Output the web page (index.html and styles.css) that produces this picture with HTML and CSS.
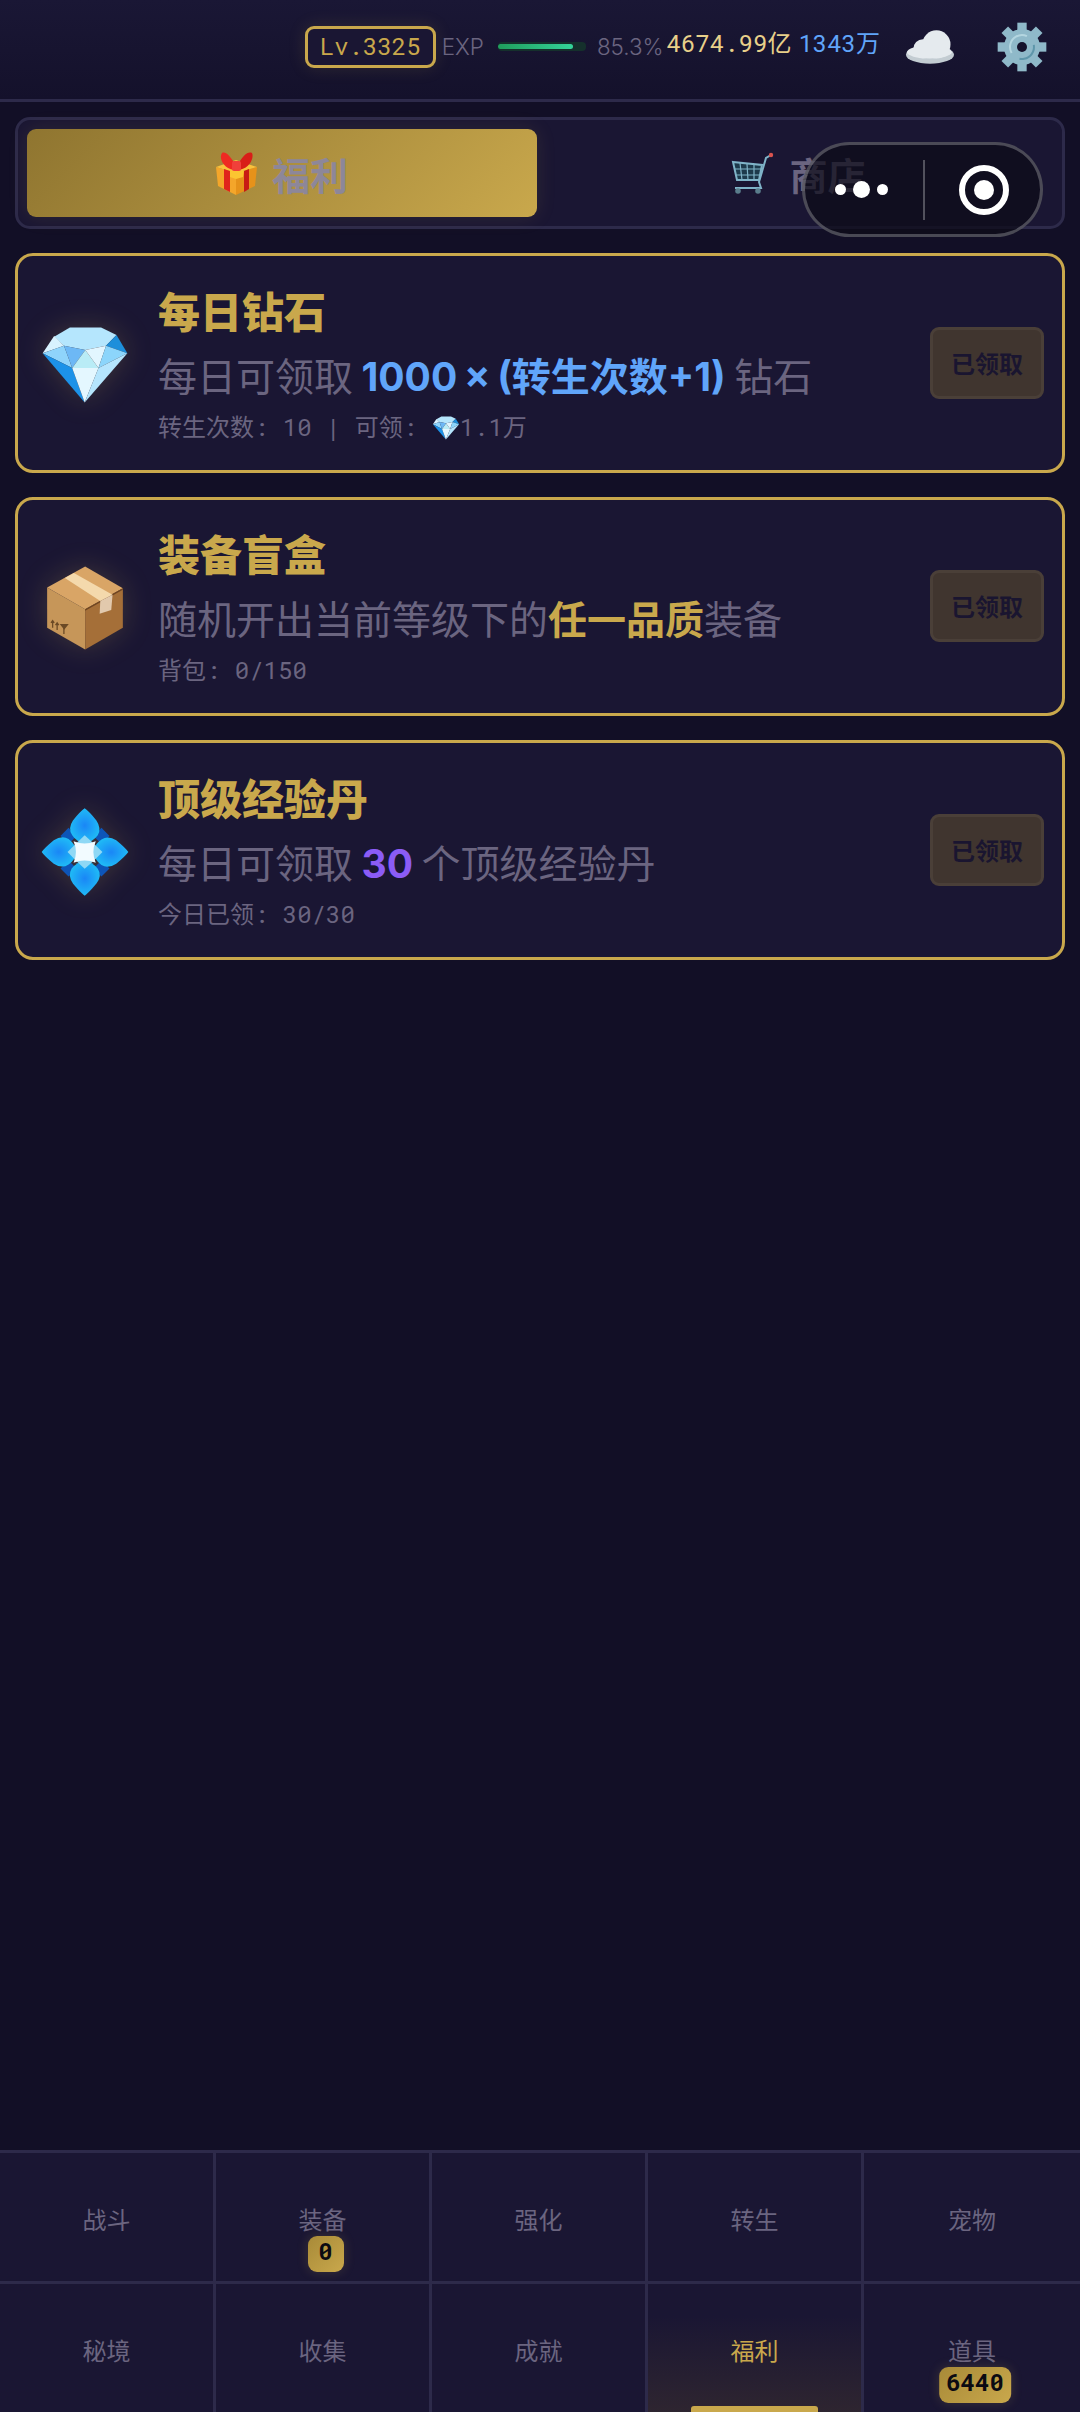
FILE: index.html
```html
<!DOCTYPE html>
<html lang="zh">
<head>
<meta charset="utf-8">
<title>福利</title>
<link rel="stylesheet" href="styles.css">
</head>
<body>
<svg class="defs" aria-hidden="true">
  <defs>
    <symbol id="diamond" viewBox="60 78 268 236">
      <polygon points="100,110 148,82 243,82 290,105 258,137 195,150 130,137" fill="#b5e6fd"/>
      <polygon points="65,160 100,108 130,137" fill="#d8f2fe"/>
      <polygon points="65,160 130,137 155,205" fill="#8fd4fb"/>
      <polygon points="130,137 195,150 155,205" fill="#6db8f5"/>
      <polygon points="195,150 235,205 155,205" fill="#b9ecf6"/>
      <polygon points="195,150 258,137 235,205" fill="#e2f6ff"/>
      <polygon points="258,137 290,105 323,160" fill="#1e8fdb"/>
      <polygon points="258,137 323,160 235,205" fill="#8cd5fb"/>
      <polygon points="65,160 155,205 193,310" fill="#1c92e8"/>
      <polygon points="155,205 235,205 193,310" fill="#e4f7ff"/>
      <polygon points="235,205 323,160 193,310" fill="#b5e5fd"/>
    </symbol>
    <symbol id="box" viewBox="70 60 245 267">
      <polygon points="193,65 310,132 193,197 75,130" fill="#d9a566"/>
      <polygon points="75,130 193,197 193,322 75,255" fill="#c69659"/>
      <polygon points="193,197 310,132 310,255 193,322" fill="#a56f38"/>
      <polygon points="193,197 310,132 310,137 193,202" fill="#6f4522"/>
      <polygon points="130,100 158,85 278,152 240,172" fill="#f4d9ac"/>
      <polygon points="240,172 278,152 274,200 238,211" fill="#e2c9ad"/>
      <path d="M92 255v-22m-5 7l5-7 5 7M106 262v-22m-5 7l5-7 5 7M127 274v-22" stroke="#6b4a26" stroke-width="4" fill="none"/>
      <path d="M114 243h28l-14 18z" fill="#6b4a26"/>
    </symbol>
    <radialGradient id="petal" cx="50%" cy="50%" r="60%">
      <stop offset="0" stop-color="#1a86f6"/>
      <stop offset="1" stop-color="#20c4f6"/>
    </radialGradient>
    <symbol id="spark" viewBox="60 65 268 270">
      <g fill="#0d55b8">
        <rect x="128" y="135" width="34" height="34" transform="rotate(45 145 152)"/>
        <rect x="226" y="135" width="34" height="34" transform="rotate(45 243 152)"/>
        <rect x="128" y="232" width="34" height="34" transform="rotate(45 145 249)"/>
        <rect x="226" y="232" width="34" height="34" transform="rotate(45 243 249)"/>
      </g>
      <g fill="url(#petal)">
        <path d="M193 70Q205 78 228 106Q244 130 232 150Q216 172 193 172Q170 172 156 150Q142 130 158 106Q181 78 193 70Z"/>
        <path d="M193 330Q181 322 158 294Q142 270 154 250Q170 228 193 228Q216 228 232 250Q246 270 228 294Q205 322 193 330Z"/>
        <path d="M65 200Q73 188 101 165Q125 149 145 161Q167 177 167 200Q167 223 145 237Q125 251 101 235Q73 212 65 200Z"/>
        <path d="M323 200Q315 212 287 235Q263 251 243 239Q221 223 221 200Q221 177 243 163Q263 149 287 165Q315 188 323 200Z"/>
      </g>
      <path d="M193 150Q222 176 246 200Q222 226 193 250Q166 226 142 200Q166 176 193 150Z" fill="#8fd8f5"/>
      <path d="M160 168Q193 182 226 168Q212 200 226 232Q193 218 160 232Q174 200 160 168Z" fill="#f2fbff"/>
    </symbol>
    <symbol id="gift" viewBox="0 0 41 43">
      <polygon points="0,15 20,21 20,43 2,34" fill="#f4a62a"/>
      <polygon points="41,15 20,21 20,43 39,34" fill="#e6921a"/>
      <polygon points="0,15 20,8 41,15 20,21" fill="#f9c23c"/>
      <polygon points="8,17 14,19 14,40 8,37" fill="#e0241c"/>
      <polygon points="28,19 33,17 33,37 28,40" fill="#c81a14"/>
      <polygon points="14,19 28,19 27,25 20,27 14,25" fill="#fbc531"/>
      <path d="M20 14C14 3 9 -1 6 1C3 5 6 16 18 18Z" fill="#ee2a22"/>
      <path d="M21 14C27 3 32 -1 36 1C38 5 35 16 23 18Z" fill="#d81e18"/>
      <rect x="16" y="9" width="9" height="10" rx="2" fill="#f0403a"/>
    </symbol>
    <symbol id="cart" viewBox="0 0 44 43">
      <path d="M3 10L32 13L29 28H7Z" fill="#1d3a4c" stroke="#7fb3c8" stroke-width="2"/>
      <path d="M10 11l2 17M17 12l1 16M24 12l0 16M5 17h26M6 23h24" stroke="#7fb3c8" stroke-width="1.2" fill="none"/>
      <path d="M41 3L36 6L29 30L31 36H5" stroke="#7fb3c8" stroke-width="2" fill="none"/>
      <circle cx="41" cy="3" r="2.2" fill="#d9534f"/>
      <circle cx="8" cy="39" r="2.8" fill="#5a7d8c"/>
      <circle cx="28" cy="39" r="2.8" fill="#5a7d8c"/>
    </symbol>
    <symbol id="cloud" viewBox="72 88 156 112">
      <ellipse cx="150" cy="168" rx="75" ry="28" fill="#c3ccd2"/>
      <circle cx="170" cy="136" r="44" fill="#e5eaee"/>
      <circle cx="128" cy="150" r="30" fill="#e5eaee"/>
      <ellipse cx="148" cy="160" rx="70" ry="20" fill="#e5eaee"/>
    </symbol>
    <symbol id="gear" viewBox="350 70 150 150">
      <g fill="#8fb9c9">
        <rect x="411" y="72" width="28" height="146"/>
        <rect x="411" y="72" width="28" height="146" transform="rotate(45 425 145)"/>
        <rect x="411" y="72" width="28" height="146" transform="rotate(90 425 145)"/>
        <rect x="411" y="72" width="28" height="146" transform="rotate(135 425 145)"/>
        <circle cx="425" cy="145" r="54"/>
      </g>
      <circle cx="425" cy="145" r="36" fill="none" stroke="#b4d6e0" stroke-width="6" stroke-dasharray="90 200" transform="rotate(150 425 145)"/>
      <circle cx="425" cy="145" r="36" fill="none" stroke="#5e96aa" stroke-width="6" stroke-dasharray="70 200" transform="rotate(-10 425 145)"/>
      <circle cx="425" cy="145" r="15" fill="#15122c"/>
    </symbol>
  </defs>
</svg>

<div class="app">
  <header class="topbar">
    <span class="level">Lv.3325</span>
    <span class="exp-label">EXP</span>
    <span class="exp-track"><span class="exp-fill"></span></span>
    <span class="exp-pct">85.3%</span>
    <span class="gold">4674.99亿</span>
    <span class="gems">1343万</span>
    <svg class="ico-cloud"><use href="#cloud"/></svg>
    <svg class="ico-gear"><use href="#gear"/></svg>
  </header>

  <div class="capsule">
    <span class="cap-dots"><i class="dot"></i><i class="dot big"></i><i class="dot"></i></span>
    <span class="cap-line"></span>
    <span class="cap-ring"><i class="cap-core"></i></span>
  </div>

  <main class="content">
    <nav class="tabs">
      <div class="tab active"><svg class="ico-tab"><use href="#gift"/></svg><span>福利</span></div>
      <div class="tab"><svg class="ico-tab cart"><use href="#cart"/></svg><span>商店</span></div>
    </nav>

    <section class="card">
      <div class="card-icon"><svg class="art diamond"><use href="#diamond"/></svg></div>
      <div class="card-info">
        <h2 class="card-title">每日钻石</h2>
        <p class="card-desc">每日可领取 <b class="blue">1000 × (转生次数+1)</b> 钻石</p>
        <p class="card-sub">转生次数: 10 | 可领: <svg class="mini"><use href="#diamond"/></svg>1.1万</p>
      </div>
      <div class="claimed">已领取</div>
    </section>

    <section class="card">
      <div class="card-icon"><svg class="art box"><use href="#box"/></svg></div>
      <div class="card-info">
        <h2 class="card-title">装备盲盒</h2>
        <p class="card-desc">随机开出当前等级下的<b class="amber">任一品质</b>装备</p>
        <p class="card-sub">背包: 0/150</p>
      </div>
      <div class="claimed">已领取</div>
    </section>

    <section class="card">
      <div class="card-icon"><svg class="art spark"><use href="#spark"/></svg></div>
      <div class="card-info">
        <h2 class="card-title">顶级经验丹</h2>
        <p class="card-desc">每日可领取 <b class="violet">30</b> 个顶级经验丹</p>
        <p class="card-sub">今日已领: 30/30</p>
      </div>
      <div class="claimed">已领取</div>
    </section>
  </main>

  <footer class="nav">
    <div class="cell">战斗</div>
    <div class="cell">装备<span class="badge">0</span></div>
    <div class="cell">强化</div>
    <div class="cell">转生</div>
    <div class="cell">宠物</div>
    <div class="cell">秘境</div>
    <div class="cell">收集</div>
    <div class="cell">成就</div>
    <div class="cell current">福利<span class="marker"></span></div>
    <div class="cell">道具<span class="badge">6440</span></div>
  </footer>
</div>
</body>
</html>
```
FILE: styles.css
```css
* { box-sizing: border-box; }
html, body { margin: 0; padding: 0; }
body {
  width: 1080px;
  height: 2412px;
  overflow: hidden;
  background: #120f26;
  font-family: "Noto Sans CJK SC", sans-serif;
  color: #6b6580;
}
.defs { position: absolute; width: 0; height: 0; }
.app { position: relative; display: flex; flex-direction: column; height: 2412px; }

.topbar {
  display: flex;
  align-items: center;
  justify-content: flex-end;
  height: 102px;
  padding: 0 33px 6px 0;
  background: linear-gradient(180deg, #1a1735, #14112b);
  border-bottom: 3px solid #2d2a4a;
  font: 300 22.4px Inter, "Noto Sans CJK SC", sans-serif;
}
.level, .gold, .gems { font: 400 24px/32px "Roboto Mono", "DejaVu Sans Mono", "Noto Sans CJK SC", monospace; }
.level {
  width: 131px;
  height: 42px;
  line-height: 34px;
  text-align: center;
  border: 3px solid #c9a84c;
  border-radius: 9px;
  color: #c9a84c;
  background: #1a1633;
  box-shadow: 0 0 18px rgba(201, 168, 76, .14);
}
.exp-label { margin-left: 6px; }
.exp-track { width: 88px; height: 9px; margin-left: 14px; border-radius: 4px; background: #15302c; overflow: hidden; display: block; }
.exp-fill { display: block; width: 85.3%; height: 5px; margin-top: 2px; border-radius: 3px; background: linear-gradient(90deg, #1f9d5c, #34d399); }
.exp-pct { margin-left: 11px; }
.gold { margin: 0 0 8px 3px; color: #e8d08a; }
.gems { margin: 0 0 8px 7px; color: #60a5fa; }
.ico-cloud { width: 50px; height: 38px; margin-left: 25px; }
.ico-gear { width: 50px; height: 50px; margin-left: 42px; }

.capsule {
  position: absolute;
  left: 802px;
  top: 142px;
  width: 241px;
  height: 95px;
  display: flex;
  align-items: center;
  border: 3px solid rgba(255, 255, 255, .25);
  border-radius: 48px;
  background: rgba(12, 11, 24, .72);
}
.cap-dots { display: flex; align-items: center; gap: 7px; margin-left: 30px; width: 56px; }
.dot { display: block; flex: none; width: 11px; height: 11px; border-radius: 50%; background: #fff; }
.dot.big { width: 17px; height: 17px; }
.cap-line { width: 2px; height: 60px; margin-left: 32px; background: rgba(255, 255, 255, .28); }
.cap-ring {
  display: flex;
  align-items: center;
  justify-content: center;
  width: 50px;
  height: 50px;
  margin-left: 34px;
  border: 6px solid #fff;
  border-radius: 50%;
}
.cap-core { display: block; width: 20px; height: 20px; border-radius: 50%; background: #fff; }

.content { flex: 1; display: flex; flex-direction: column; gap: 24px; padding: 15px 15px 0; }
.tabs {
  display: flex;
  gap: 6px;
  height: 112px;
  padding: 9px;
  border: 3px solid #2d2a4a;
  border-radius: 15px;
  background: #1a1633;
}
.tab {
  flex: 1;
  display: flex;
  align-items: center;
  justify-content: center;
  gap: 15px;
  border-radius: 9px;
  font-size: 38px;
  font-weight: 700;
  color: #6b6580;
}
.tab.active {
  background: linear-gradient(135deg, #8f7530, #c9a84c);
  color: #8d8799;
  box-shadow: 0 0 20px rgba(201, 168, 76, .12);
}
.ico-tab { width: 41px; height: 43px; }
.ico-tab.cart { width: 44px; }

.card {
  display: flex;
  align-items: center;
  height: 219.5px;
  padding: 0 18px 0 22px;
  border: 3px solid #c9a84c;
  border-radius: 18px;
  background: #1a1633;
}
.card-icon { width: 90px; height: 90px; display: flex; align-items: center; justify-content: center; flex: none; margin-top: 4px; }
.art { filter: drop-shadow(0 0 14px rgba(201, 168, 76, .22)); }
.art.diamond { width: 88px; height: 78px; }
.art.box { width: 80px; height: 86px; }
.art.spark { width: 92px; height: 92px; }
.card-info { flex: 1; margin-left: 28px; min-width: 0; padding-top: 3px; }
.card-title { margin: 0; font: 900 42px/52px "Noto Sans CJK SC", sans-serif; color: #c9a84c; }
.card-desc { margin: 13px 0 0; font: 39px/56px Inter, "Noto Sans CJK SC", sans-serif; white-space: nowrap; word-spacing: -2.5px; }
.card-desc b { font-weight: 700; }
.blue { color: #60a5fa; }
.amber { color: #c9a84c; }
.violet { color: #8b5cf6; }
.card-sub { margin: 4px 0 0; font: 24px/36px "Roboto Mono", "DejaVu Sans Mono", "Noto Sans CJK SC", monospace; white-space: pre; }
.mini { width: 28px; height: 24px; vertical-align: -4px; }
.claimed {
  flex: none;
  width: 114px;
  height: 72px;
  text-align: center;
  border: 3px solid #4a3f38;
  border-radius: 9px;
  background: #40352f;
  color: #1a1530;
  font: 700 24px/66px "Noto Sans CJK SC", sans-serif;
}

.nav {
  display: grid;
  grid-template-columns: repeat(5, 216px);
  grid-auto-rows: 128px;
  row-gap: 3px;
  border-top: 3px solid #2d2a4a;
  background: #2d2a4a;
  font: 24px "Noto Sans CJK SC", sans-serif;
}
.cell {
  position: relative;
  display: flex;
  align-items: center;
  justify-content: center;
  padding-top: 3px;
  background: #1a1633;
  border-right: 3px solid #2d2a4a;
}
.cell:nth-child(5n) { border-right: 0; }
.cell.current { color: #c9a84c; background: linear-gradient(0deg, #2e2530, #1a1633 75%); }
.badge {
  position: absolute;
  top: 83px;
  left: 50%;
  min-width: 36px;
  height: 36px;
  padding: 0 7px;
  transform: translateX(calc(-50% + 3px));
  border-radius: 9px;
  background: linear-gradient(135deg, #a88a38, #c9a84c);
  color: #0b0a12;
  font: 700 24px/30px "Roboto Mono", "DejaVu Sans Mono", monospace;
  text-align: center;
  box-shadow: 0 0 12px rgba(201, 168, 76, .2);
}
.marker {
  position: absolute;
  left: 43px;
  bottom: 0;
  width: 127px;
  height: 6px;
  border-radius: 3px 3px 0 0;
  background: #c9a84c;
}
```
